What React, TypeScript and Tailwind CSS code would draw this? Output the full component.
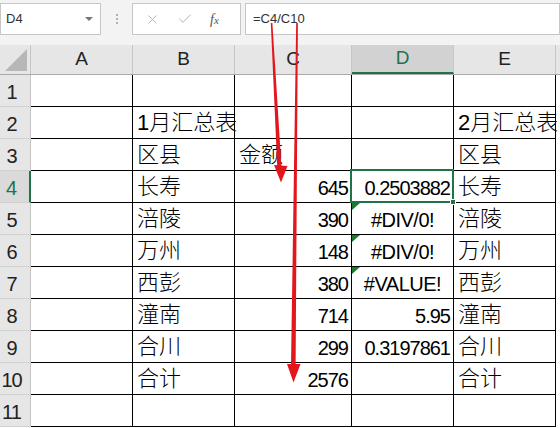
import { X, Check } from "lucide-react";

const NUM = { fontFamily: "'Liberation Sans', Arial, sans-serif" };
const CJK = { fontFamily: "'Liberation Sans', 'Noto Sans CJK SC', sans-serif" };

const WIDTHS = ["w-[102px]", "w-[102px]", "w-[117px]", "w-[102px]", "w-[102px]"];
const LETTERS = ["A", "B", "C", "D", "E"];

type V = { t: string; kind?: "text" | "num" | "err"; flag?: boolean };

const rows: V[][] = [
  [],
  [{ t: "" }, { t: "1月汇总表" }, { t: "" }, { t: "" }, { t: "2月汇总表" }],
  [{ t: "" }, { t: "区县" }, { t: "金额" }, { t: "" }, { t: "区县" }],
  [{ t: "" }, { t: "长寿" }, { t: "645", kind: "num" }, { t: "0.2503882", kind: "num" }, { t: "长寿" }],
  [{ t: "" }, { t: "涪陵" }, { t: "390", kind: "num" }, { t: "#DIV/0!", kind: "err", flag: true }, { t: "涪陵" }],
  [{ t: "" }, { t: "万州" }, { t: "148", kind: "num" }, { t: "#DIV/0!", kind: "err", flag: true }, { t: "万州" }],
  [{ t: "" }, { t: "西彭" }, { t: "380", kind: "num" }, { t: "#VALUE!", kind: "err", flag: true }, { t: "西彭" }],
  [{ t: "" }, { t: "潼南" }, { t: "714", kind: "num" }, { t: "5.95", kind: "num" }, { t: "潼南" }],
  [{ t: "" }, { t: "合川" }, { t: "299", kind: "num" }, { t: "0.3197861", kind: "num" }, { t: "合川" }],
  [{ t: "" }, { t: "合计" }, { t: "2576", kind: "num" }, { t: "" }, { t: "合计" }],
  [],
];

function Cell({ v, w, sel }: { v?: V; w: string; sel?: boolean }) {
  const kind = v?.kind ?? "text";
  return (
    <div className={`${w} h-full shrink-0 relative border-r border-b border-black flex items-center`}>
      {v?.t && kind === "text" && (
        <span className="absolute left-[4px] top-[3px] whitespace-nowrap text-[22px] leading-[26px] font-light text-black" style={CJK}>
          {v.t}
        </span>
      )}
      {v?.t && kind === "num" && (
        <span className="ml-auto pr-[3px] pt-[3px] text-[20px] tracking-[-1px] text-black" style={NUM}>
          {v.t}
        </span>
      )}
      {v?.t && kind === "err" && (
        <span className="w-full text-center pt-[3px] text-[20px] tracking-[-0.5px] text-black" style={NUM}>
          {v.t}
        </span>
      )}
      {v?.flag && (
        <span className="absolute left-0 top-0 w-0 h-0 border-t-[7px] border-r-[8px] border-t-[#1e7a2e] border-r-transparent" />
      )}
      {sel && (
        <div className="absolute left-[-2px] top-[-2px] w-[104px] h-[34px] border-2 border-[#217346] z-10">
          <div className="absolute right-[-4px] bottom-[-4px] w-[6px] h-[6px] bg-[#217346] border border-white" />
        </div>
      )}
    </div>
  );
}

export default function App() {
  return (
    <div className="relative w-[560px] h-[428px] overflow-hidden bg-white select-none">
      {/* formula bar */}
      <div className="h-[45px] bg-[#f3f3f3] flex items-start pt-[3px]">
        <div className="w-[101px] h-[32px] bg-white border border-[#c6c6c6] flex items-center pl-[5px]">
          <span className="text-[13px] text-[#333]" style={NUM}>D4</span>
          <span className="ml-auto mr-[7px] w-0 h-0 border-l-[4px] border-r-[4px] border-t-[4px] border-l-transparent border-r-transparent border-t-[#777]" />
        </div>
        <div className="w-[31px] h-[32px] flex flex-col items-center justify-center gap-[2px]">
          <span className="w-[2px] h-[2px] bg-[#b0b0b0]" />
          <span className="w-[2px] h-[2px] bg-[#b0b0b0]" />
          <span className="w-[2px] h-[2px] bg-[#b0b0b0]" />
        </div>
        <div className="w-[109px] h-[32px] bg-white border border-[#c6c6c6] flex items-center">
          <X className="ml-[12px] w-[15px] h-[15px] text-[#b3b3b3]" strokeWidth={1.5} />
          <Check className="ml-[17px] w-[16px] h-[16px] text-[#b3b3b3]" strokeWidth={1.5} />
          <span className="ml-[17px] text-[14px] italic text-[#555]" style={{ fontFamily: "'Liberation Serif', serif" }}>
            f<span className="text-[11px]">x</span>
          </span>
        </div>
        <div className="ml-[4px] flex-1 h-[32px] bg-white border border-[#c6c6c6] flex items-center pl-[7px]">
          <span className="text-[13px] text-[#333]" style={NUM}>=C4/C10</span>
        </div>
      </div>

      {/* column headers */}
      <div className="flex h-[30px] bg-[#e6e6e6] border-b border-[#ababab]" style={NUM}>
        <div className="w-[31px] shrink-0 h-full border-r border-[#c6c6c6] relative">
          <svg className="absolute left-0 top-0" width="31" height="30">
            <polygon points="5,26 27,26 27,4" fill="#b7b7b7" />
          </svg>
        </div>
        {LETTERS.map((l, i) => (
          <div
            key={l}
            className={`${WIDTHS[i]} shrink-0 h-full border-r border-[#c6c6c6] flex items-center justify-center text-[19px] ${
              l === "D" ? "bg-[#d2d2d2] text-[#217346] border-b-2 border-b-[#217346]" : "text-[#222]"
            }`}
          >
            {l}
          </div>
        ))}
        <div className="flex-1" />
      </div>

      {/* rows */}
      {rows.map((r, ri) => (
        <div key={ri} className="flex h-[32px]">
          <div
            className={`w-[31px] shrink-0 h-full border-b border-[#d0d0d0] flex items-center justify-center pr-[7px] pt-[2px] text-[20px] tracking-[-1px] ${
              ri === 3
                ? "bg-[#dadada] text-[#217346] border-r-2 border-r-[#217346]"
                : "bg-[#e6e6e6] text-[#222] border-r border-r-[#c6c6c6]"
            }`}
            style={NUM}
          >
            {ri + 1}
          </div>
          {WIDTHS.map((w, ci) => (
            <Cell key={ci} v={r[ci]} w={w} sel={ri === 3 && ci === 3} />
          ))}
          <div className="flex-1" />
        </div>
      ))}

      {/* annotation arrows */}
      <svg className="absolute left-0 top-0 pointer-events-none" width="560" height="428">
        <polygon points="270.8,23 272.4,23 281.5,168 277.3,168" fill="#e3161e" />
        <polygon points="274,165 287.5,166 281,182.5" fill="#e3161e" />
        <polygon points="296.2,23 297.9,23 295.6,366 291,366" fill="#e3161e" />
        <polygon points="287,364 300.5,364 293.5,382.5" fill="#e3161e" />
      </svg>
    </div>
  );
}
